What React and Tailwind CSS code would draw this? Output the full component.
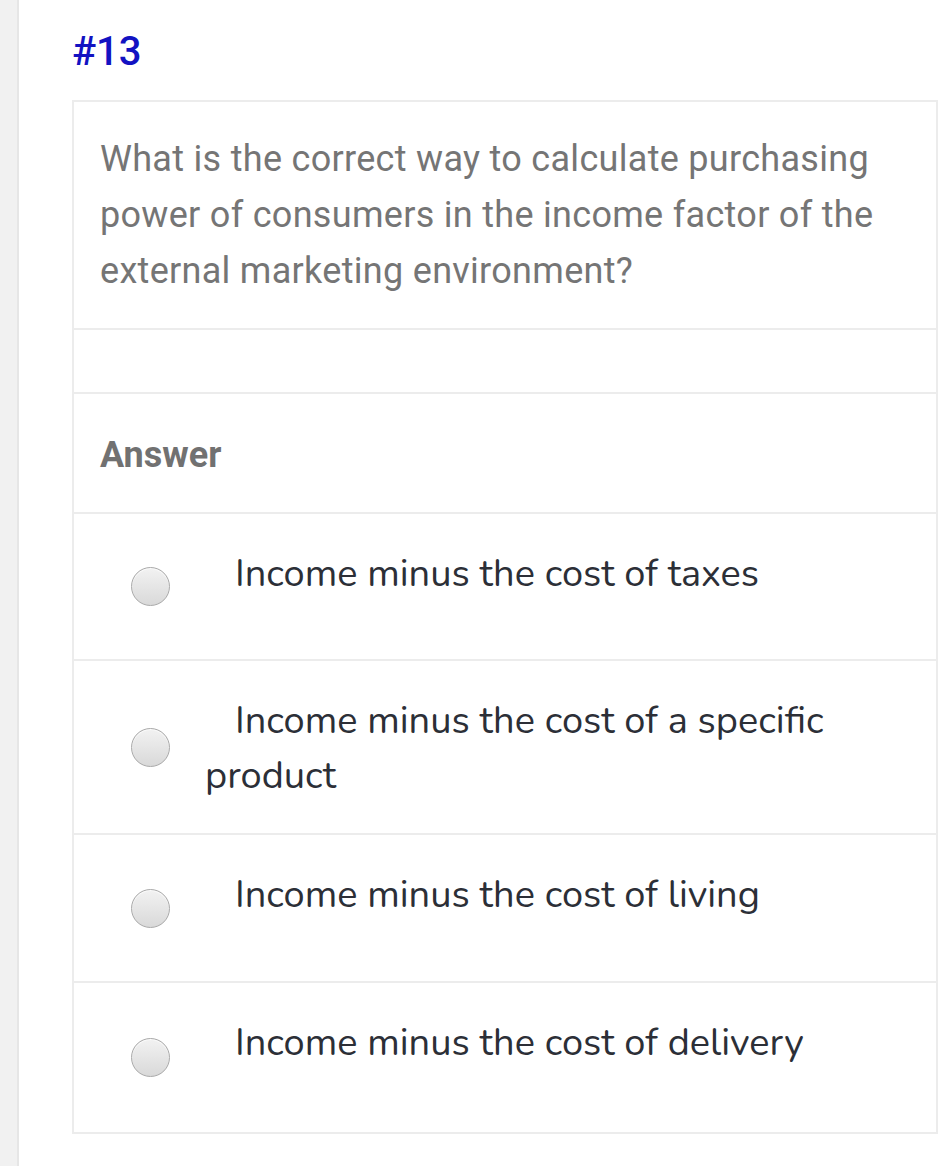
import React from 'react';

const options = [
  { text: 'Income minus the cost of taxes', h: 'h-[147px]' },
  { text: 'Income minus the cost of a specific product', h: 'h-[174px]' },
  { text: 'Income minus the cost of living', h: 'h-[148px]' },
  { text: 'Income minus the cost of delivery', h: 'h-[149px]' },
];

const Radio = () => (
  <span className="block w-[39px] h-[39px] rounded-full border border-[#a9a9a9] bg-gradient-to-b from-[#f2f2f2] to-[#d9d9d9] shadow-[inset_0_1px_1px_rgba(255,255,255,0.8)]" />
);

const App = () => {
  return (
    <div className="flex min-h-[1166px] bg-white">
      {/* Left rail */}
      <div className="w-[19px] shrink-0 bg-[#f1f1f1] border-r-2 border-[#e6e6e6]" />

      <div className="flex-1 pl-[53px] pr-[13px]">
        {/* Question number */}
        <h1 className="pt-[26px] h-[100px] text-[40px] leading-[52px] font-medium text-[#1212c2] font-['Roboto',sans-serif]">
          #13
        </h1>

        {/* Card */}
        <div className="border-2 border-[#ececec] bg-white">
          <div className="pl-[26px] pr-[20px] pt-[29px] pb-[29px] border-b-2 border-[#ececec]">
            <p className="text-[36px] tracking-[0.3px] leading-[56px] text-[#757575] font-['Roboto',sans-serif]">
              What is the correct way to calculate purchasing power of consumers in the income factor of the external marketing environment?
            </p>
          </div>

          <div className="h-[64px] border-b-2 border-[#ececec]" />

          <div className="h-[120px] flex items-center pl-[26px] border-b-2 border-[#ececec]">
            <h2 className="text-[36px] font-bold text-[#717171] font-['Roboto',sans-serif] pt-[3px]">Answer</h2>
          </div>

          {options.map((opt, i) => (
            <div
              key={i}
              className={`flex ${opt.h} ${i < options.length - 1 ? 'border-b-2 border-[#ececec]' : ''}`}
            >
              <div className="w-[131px] shrink-0 flex items-center pl-[57px]">
                <Radio />
              </div>
              <p className="pt-[32px] pr-[40px] indent-[30px] text-[38px] leading-[55px] text-[#2c2f37] font-['Nunito','Lato',sans-serif]">
                {opt.text}
              </p>
            </div>
          ))}
        </div>
      </div>
    </div>
  );
};

export default App;
